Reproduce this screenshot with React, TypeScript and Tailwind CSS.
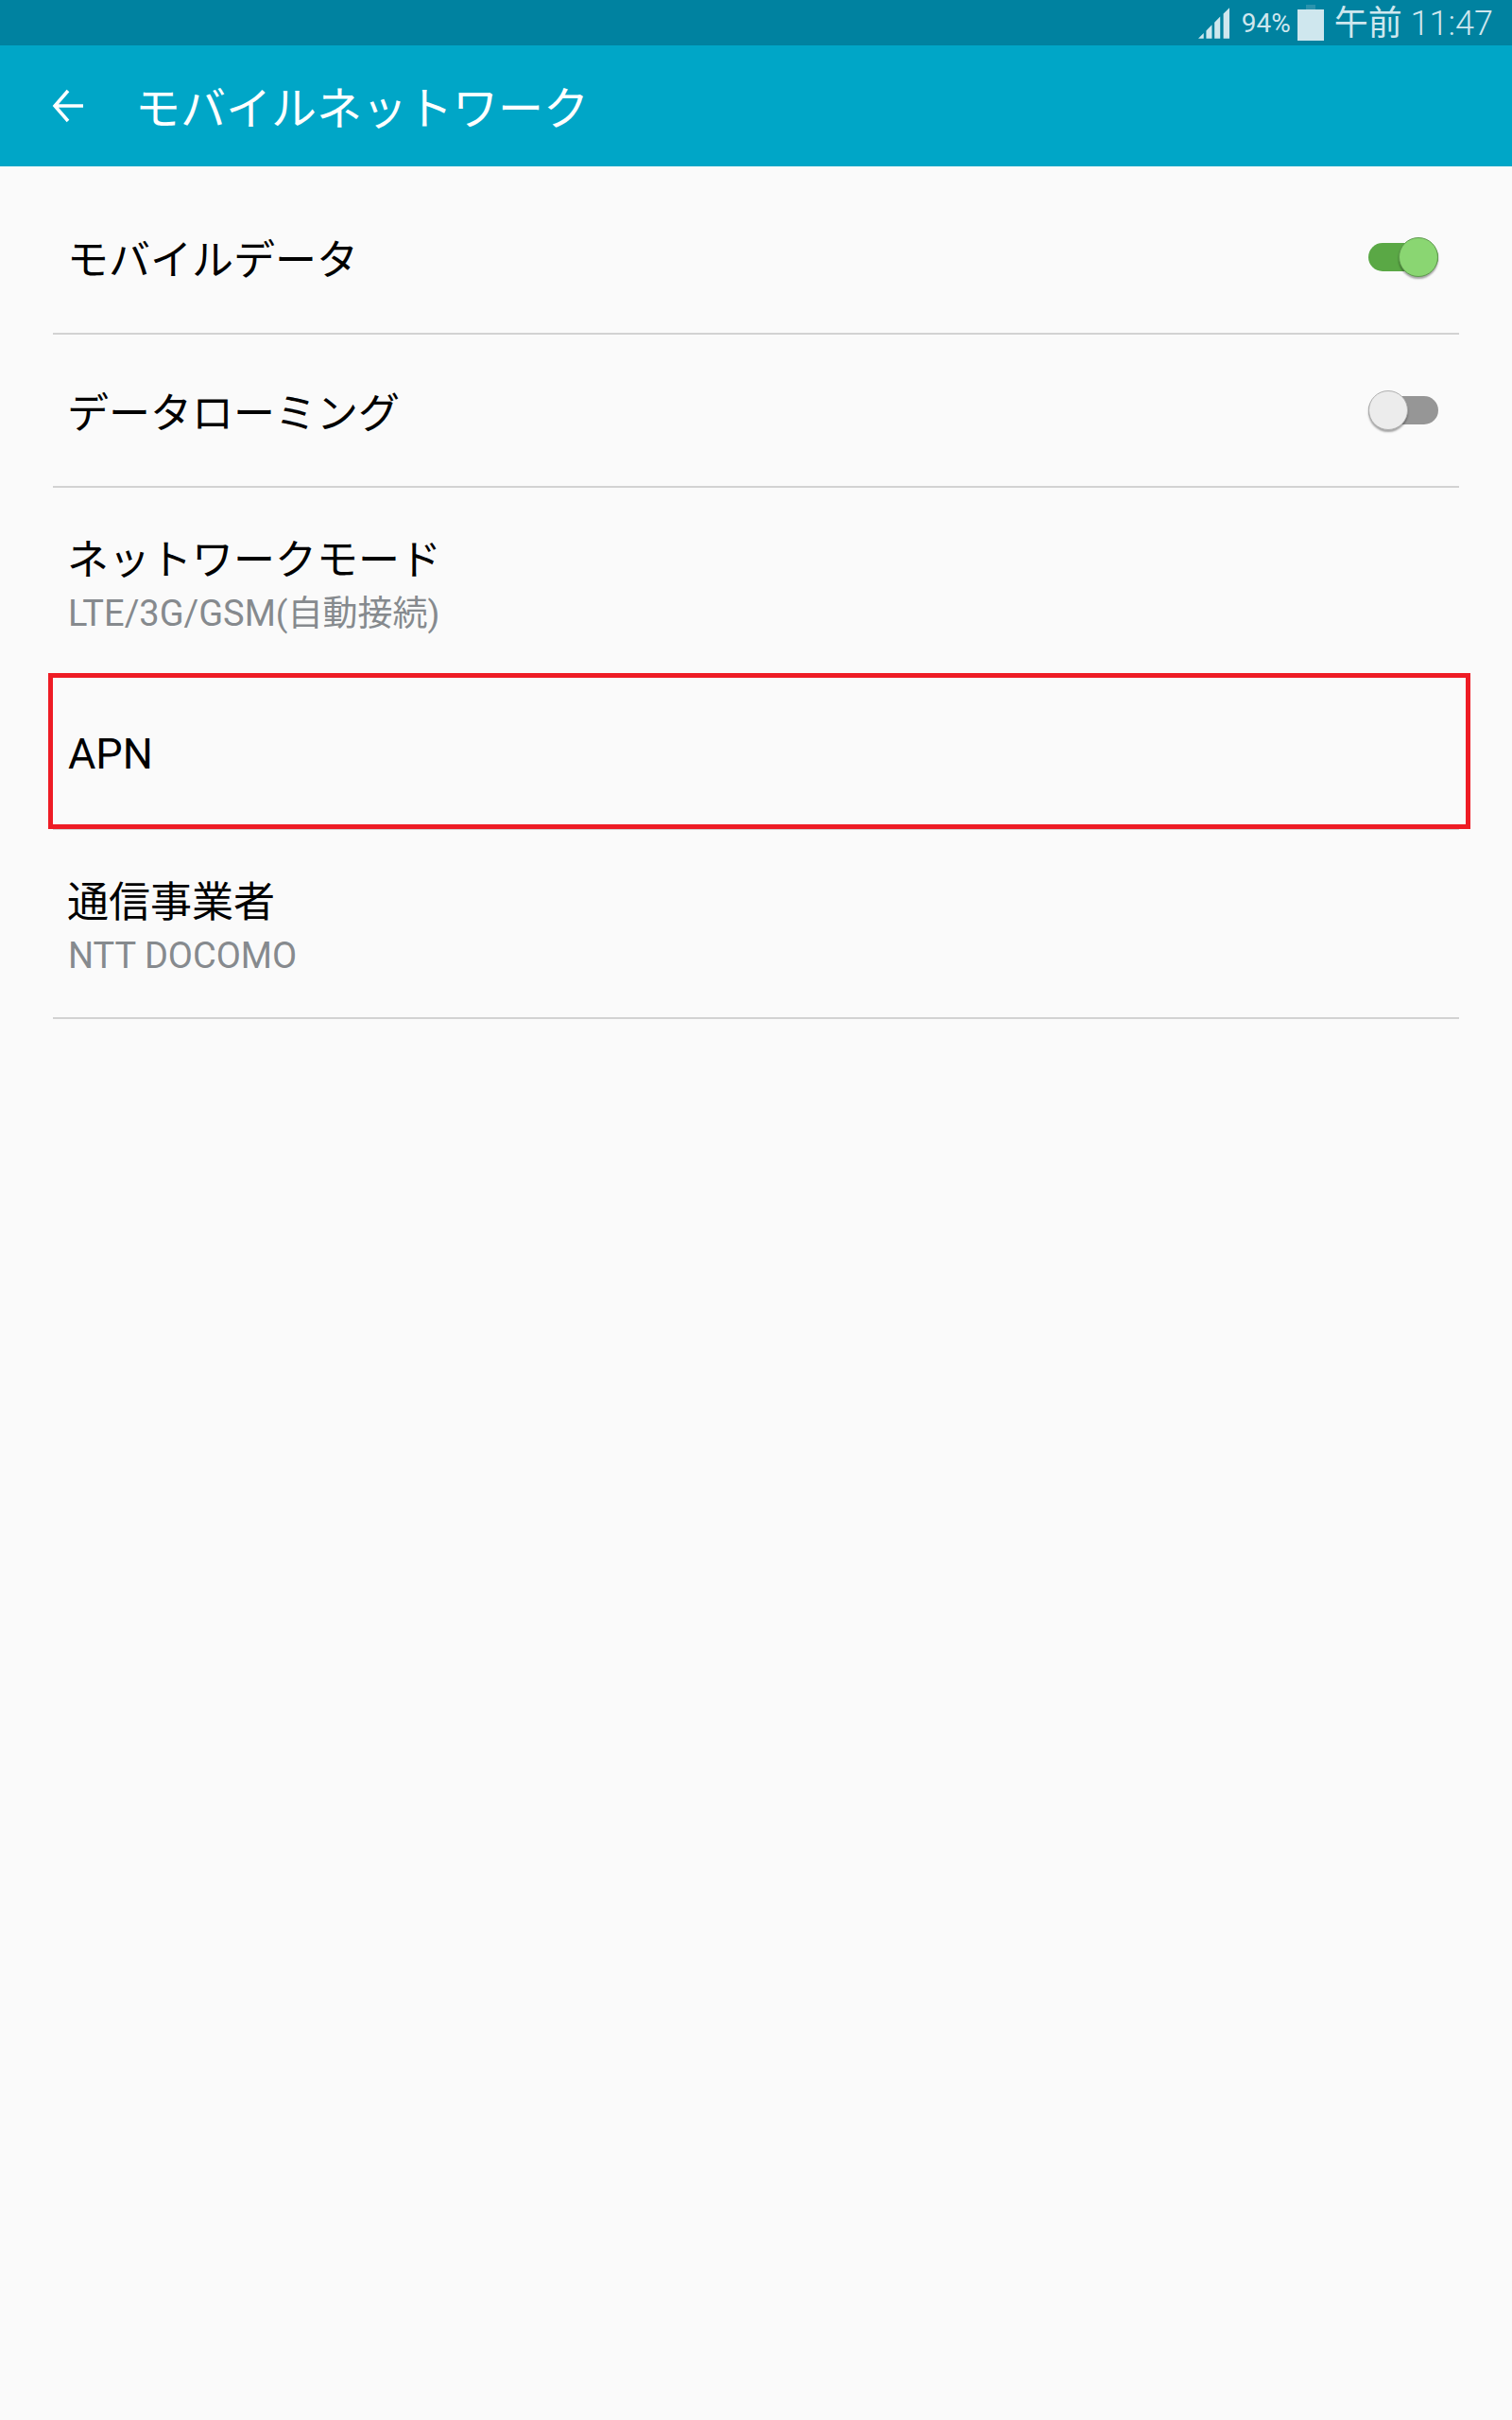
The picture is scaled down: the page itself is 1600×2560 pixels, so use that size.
const font = "font-['Roboto','Noto_Sans_CJK_JP',sans-serif]";

function SignalIcon() {
  return (
    <svg width="33" height="33" viewBox="0 0 98 97" className="shrink-0">
      <path
        fill="#cfe7ee"
        d="M0 97 L17 80 V97 Z M25 72 L43 54 V97 H25 Z M51 46 L69 28 V97 H51 Z M79 19 L98 0 V97 H79 Z"
      />
    </svg>
  );
}

function BatteryIcon() {
  return (
    <svg width="28" height="38" viewBox="0 0 28 38" className="shrink-0">
      <rect x="9" y="0" width="10" height="6" fill="#2a93ad" />
      <rect x="0" y="5" width="28" height="33" fill="#cfe7ee" />
    </svg>
  );
}

function Toggle({ on }: { on: boolean }) {
  return (
    <div className={`relative flex h-[42px] w-[74px] items-center ${on ? "justify-end" : "justify-start"}`}>
      <div className={`absolute inset-x-0 top-[6px] h-[30px] rounded-full ${on ? "bg-[#5aa845]" : "bg-[#969696]"}`} />
      <div
        className={`relative h-[42px] w-[42px] rounded-full border shadow-[0_2px_2px_rgba(0,0,0,0.35)] ${
          on ? "border-[#5f9a4e] bg-[#8ad672]" : "border-[#b0b0b0] bg-[#ececec]"
        }`}
      />
    </div>
  );
}

function Row({
  title,
  sub,
  subNote,
  toggle,
  tall,
  boxed,
}: {
  title: string;
  sub?: string;
  subNote?: string;
  toggle?: boolean;
  tall?: boolean;
  boxed?: boolean;
}) {
  return (
    <div
      className={`relative mx-[56px] flex items-center justify-between border-b-2 border-[#d2d2d2] pl-[16px] pr-[22px] ${
        tall ? "h-[200px]" : "h-[162px]"
      }`}
    >
      <div className={`flex flex-col ${boxed ? "pt-[4px]" : "pt-[7px]"}`}>
        <span className={`leading-[56px] text-black ${boxed ? "text-[45px]" : "-ml-[1px] text-[44px]"}`}>{title}</span>
        {sub && (
          <span className="mt-[5px] text-[38px] leading-[46px] text-[#868a8e]">
            {sub}
            {subNote && <span className="text-[37px]">{subNote}</span>}
          </span>
        )}
      </div>
      {toggle !== undefined && <Toggle on={toggle} />}
      {boxed && (
        <div className="absolute -left-[5px] -right-[12px] -top-[4px] -bottom-[1px] border-[5px] border-[#ee1c25]" />
      )}
    </div>
  );
}

export default function App() {
  return (
    <div className={`flex h-[2560px] w-[1600px] flex-col bg-[#fafafa] ${font}`}>
      <div className="flex h-[48px] items-center justify-end bg-[#0082a0] pr-[20px] text-[#cfe7ee]">
        <SignalIcon />
        <span className="ml-[13px] pt-[2px] text-[28px] leading-none">94%</span>
        <div className="ml-[7px]">
          <BatteryIcon />
        </div>
        <span className="ml-[11px] pt-[2px] text-[36px] font-light leading-none">
          <span className="font-normal">午前</span> 11:47
        </span>
      </div>

      <div className="flex h-[128px] items-center bg-[#00a6c7] text-white">
        <svg width="34" height="36" viewBox="0 0 34 36" className="ml-[55px]" fill="none" stroke="white" strokeWidth="3.5">
          <path d="M33 18 H3 M17 2 L3 18 L17 34" />
        </svg>
        <span className="ml-[54px] pt-[8px] text-[48px] leading-none">モバイルネットワーク</span>
      </div>

      <div className="flex flex-col pt-[16px]">
        <Row title="モバイルデータ" toggle={true} />
        <Row title="データローミング" toggle={false} />
        <Row title="ネットワークモード" sub="LTE/3G/GSM" subNote="(自動接続)" tall />
        <Row title="APN" boxed />
        <Row title="通信事業者" sub="NTT DOCOMO" tall />
      </div>
    </div>
  );
}
